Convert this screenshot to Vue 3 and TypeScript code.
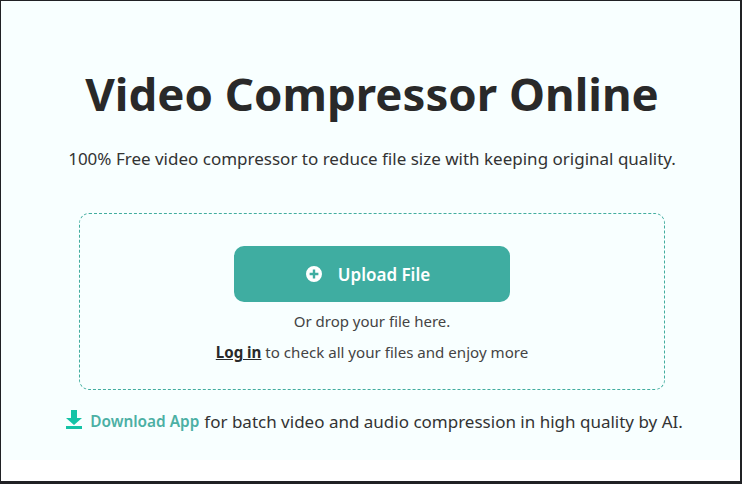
<script setup lang="ts">
const title = 'Video Compressor Online'
</script>

<template>
  <div class="frame">
    <main class="hero">
      <h1 class="title">{{ title }}</h1>
      <p class="subtitle">100% Free video compressor to reduce file size with keeping original quality.</p>
      <section class="drop">
        <button class="upload" type="button">
          <svg class="plus" viewBox="0 0 16 16" aria-hidden="true">
            <path fill-rule="evenodd" d="M8 0a8 8 0 1 0 0 16A8 8 0 0 0 8 0ZM6.8 3.6h2.4v3.2h3.2v2.4H9.2v3.2H6.8V9.2H3.6V6.8h3.2Z" fill="#fff" />
          </svg>
          <span>Upload File</span>
        </button>
        <p class="hint">Or drop your file here.</p>
        <p class="login"><a class="login-link">Log in</a> to check all your files and enjoy more</p>
      </section>
      <p class="download">
        <svg class="dl" viewBox="0 0 16 19" aria-hidden="true">
          <path d="M5 0h6v8h5l-8 7L0 8h5ZM0 16h16v3H0Z" fill="#15c3a6" />
        </svg>
        <a class="dl-link">Download App</a> for batch video and audio compression in high quality by AI.
      </p>
    </main>
  </div>
</template>

<style>
html, body { margin: 0; background: #fff; }
</style>

<style scoped>
.frame {
  box-sizing: border-box;
  width: 742px;
  height: 484px;
  border-style: solid;
  border-color: #202124;
  border-width: 1px 2px 3px 1px;
  background: #fff;
  font-family: "Noto Sans", "Open Sans", sans-serif;
  color: #292929;
}
.hero {
  height: 459px;
  background: #f8ffff;
  display: flex;
  flex-direction: column;
  align-items: center;
  box-sizing: border-box;
  padding: 60px 0 0 3px;
}
.title {
  margin: 0;
  font-size: 45.6px;
  line-height: 64px;
  font-weight: 700;
  white-space: nowrap;
}
.subtitle {
  margin: 22px 0 0;
  font-size: 17px;
  line-height: 24px;
  color: #333;
  white-space: nowrap;
}
.drop {
  box-sizing: border-box;
  width: 586px;
  height: 177px;
  margin-top: 42px;
  padding-top: 32px;
  border: 1px dashed #42ad9f;
  border-radius: 10px;
  display: flex;
  flex-direction: column;
  align-items: center;
}
.upload {
  width: 276px;
  height: 56px;
  border: 0;
  border-radius: 10px;
  background: #3fada1;
  color: #fff;
  font: 600 17px "Noto Sans", sans-serif;
  display: flex;
  align-items: center;
  justify-content: center;
  gap: 16px;
  padding: 0 8px 0 0;
}
.plus { width: 16px; height: 16px; }
.hint {
  margin: 9px 0 0;
  font-size: 15px;
  line-height: 20px;
  color: #444;
}
.login {
  margin: 11px 0 0;
  font-size: 15.1px;
  line-height: 20px;
  color: #444;
}
.login-link {
  font-weight: 700;
  color: #292929;
  text-decoration: underline;
}
.download {
  margin: 20px 0 0 5px;
  font-size: 17px;
  line-height: 24px;
  color: #333;
  white-space: nowrap;
  display: flex;
  align-items: center;
}
.dl { width: 16px; height: 19px; margin: 0 8px 5px 0; }
.dl-link {
  font-weight: 600;
  font-size: 15.4px;
  color: #4cb0a4;
  margin-right: 5px;
}
</style>
